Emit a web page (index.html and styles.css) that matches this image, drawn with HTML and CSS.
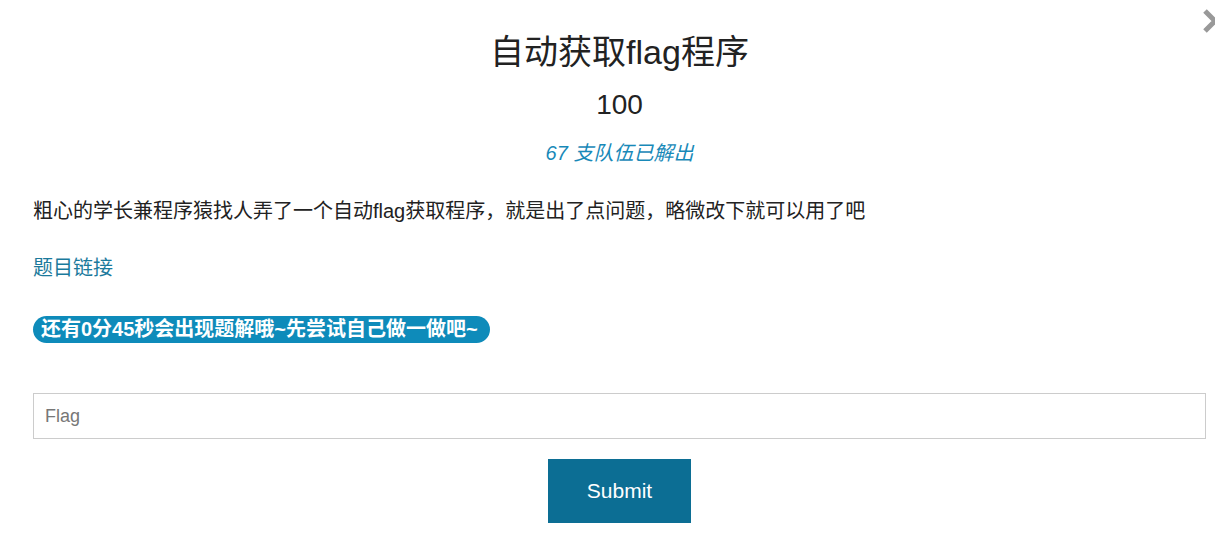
FILE: index.html
```html
<!DOCTYPE html>
<html lang="zh">
<head>
<meta charset="utf-8">
<title>自动获取flag程序</title>
<link rel="stylesheet" href="styles.css">
</head>
<body>
<div class="modal">
  <svg class="close" width="26" height="26" viewBox="0 0 26 26" aria-label="close">
    <path d="M3 3 L23 23 M23 3 L3 23" stroke="#999" stroke-width="5" fill="none"/>
  </svg>
  <h1 class="title">自动获取flag程序</h1>
  <div class="value">100</div>
  <div class="solves">67 支队伍已解出</div>
  <p class="desc">粗心的学长兼程序猿找人弄了一个自动flag获取程序，就是出了点问题，略微改下就可以用了吧</p>
  <p class="link-row"><a class="link" href="#">题目链接</a></p>
  <div class="hint-row"><span class="badge">还有0分45秒会出现题解哦~先尝试自己做一做吧~</span></div>
  <form class="form">
    <input class="flag-input" type="text" placeholder="Flag">
    <button class="submit" type="button">Submit</button>
  </form>
</div>
</body>
</html>
```
FILE: styles.css
```css
html, body {
  margin: 0;
  padding: 0;
  background: #fff;
}
body {
  font-family: "Liberation Sans", Arial, "Noto Sans CJK SC", sans-serif;
  color: #333;
  overflow: hidden;
}
.modal {
  position: relative;
  width: 1215px;
  height: 547px;
  box-sizing: border-box;
  padding: 30px 9px 0 33px;
}
.close {
  position: absolute;
  top: 8px;
  left: 1202px;
}
.title {
  margin: 0;
  text-align: center;
  font-size: 34px;
  font-weight: normal;
  line-height: 44px;
  color: #222;
}
.value {
  margin-top: 14px;
  text-align: center;
  font-size: 28px;
  line-height: 34px;
  color: #222;
}
.solves {
  margin-top: 19px;
  text-align: center;
  font-size: 20px;
  font-style: italic;
  line-height: 24px;
  color: #1889b8;
}
.desc {
  margin: 34px 0 0;
  font-size: 20px;
  line-height: 24px;
  color: #222;
}
.link-row {
  margin: 33px 0 0;
  font-size: 20px;
  line-height: 24px;
}
.link {
  color: #1b7a9c;
  text-decoration: none;
}
.hint-row {
  margin-top: 36px;
  display: flex;
}
.badge {
  display: inline-block;
  background: #0e8bba;
  color: #fff;
  font-weight: bold;
  font-size: 20px;
  line-height: 27px;
  padding: 0 12px 0 8px;
  border-radius: 14px;
}
.form {
  margin-top: 50px;
  display: flex;
  flex-direction: column;
  align-items: center;
}
.flag-input {
  width: 100%;
  box-sizing: border-box;
  height: 46px;
  border: 1px solid #ccc;
  padding: 0 11px;
  font-family: "Liberation Sans", Arial, sans-serif;
  font-size: 18px;
  color: #555;
  outline: none;
}
.flag-input::placeholder {
  color: #777;
}
.submit {
  margin-top: 20px;
  width: 143px;
  height: 64px;
  border: none;
  background: #0c6e94;
  color: #fff;
  font-family: "Liberation Sans", Arial, sans-serif;
  font-size: 21px;
}
```
